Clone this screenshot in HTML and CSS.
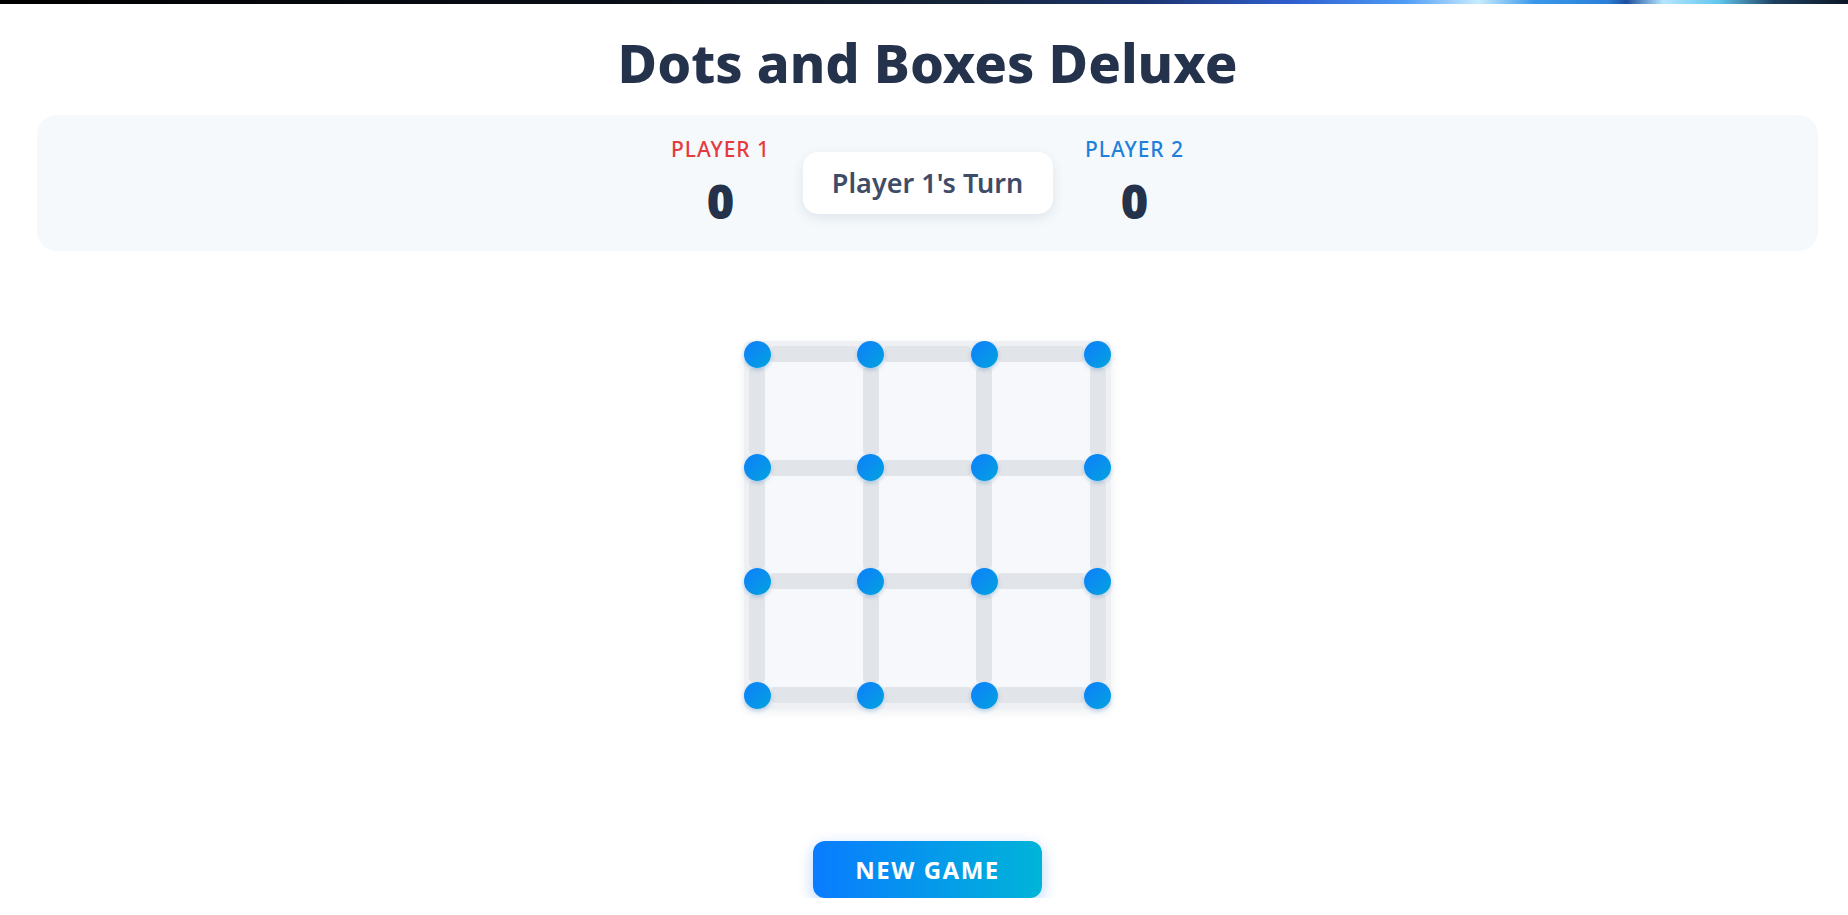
FILE: index.html
```html
<!DOCTYPE html>
<html>
	<head>
		<meta charset="utf-8">
		<title>Dots and Boxes Deluxe</title>
		<link rel="stylesheet" href="styles.css">
	</head>

	<body>
		<div class="topbar"></div>
		<div class="app">
			<h1 class="title">Dots and Boxes Deluxe</h1>

			<div class="scoreboard">
				<div class="player p1">
					<div class="player-name">PLAYER 1</div>
					<div class="player-score">0</div>
				</div>
				<div class="turn">Player 1's Turn</div>
				<div class="player p2">
					<div class="player-name">PLAYER 2</div>
					<div class="player-score">0</div>
				</div>
			</div>

			<div class="board">
				<div class="dot"></div><div class="hline"></div><div class="dot"></div><div class="hline"></div><div class="dot"></div><div class="hline"></div><div class="dot"></div>
				<div class="vline"></div><div class="box"></div><div class="vline"></div><div class="box"></div><div class="vline"></div><div class="box"></div><div class="vline"></div>
				<div class="dot"></div><div class="hline"></div><div class="dot"></div><div class="hline"></div><div class="dot"></div><div class="hline"></div><div class="dot"></div>
				<div class="vline"></div><div class="box"></div><div class="vline"></div><div class="box"></div><div class="vline"></div><div class="box"></div><div class="vline"></div>
				<div class="dot"></div><div class="hline"></div><div class="dot"></div><div class="hline"></div><div class="dot"></div><div class="hline"></div><div class="dot"></div>
				<div class="vline"></div><div class="box"></div><div class="vline"></div><div class="box"></div><div class="vline"></div><div class="box"></div><div class="vline"></div>
				<div class="dot"></div><div class="hline"></div><div class="dot"></div><div class="hline"></div><div class="dot"></div><div class="hline"></div><div class="dot"></div>
			</div>

			<div class="controls">
				<button class="new-game">NEW GAME</button>
			</div>
		</div>
	</body>
</html>
```

FILE: styles.css
```css
html,
body {
	margin: 0;
	padding: 0;
	background-color: #ffffff;
	font-family: "Noto Sans", "Open Sans", sans-serif;
}

.topbar {
	height: 4px;
	background: linear-gradient(
		90deg,
		#000000 0%,
		#0a0f18 35%,
		#15243a 52%,
		#1c3570 62%,
		#2f5fd0 70%,
		#4d9cf5 76%,
		#c8ecff 80%,
		#3a98ea 83%,
		#2a7fd8 87%,
		#1d4f9e 88%,
		#b5e6ff 90%,
		#62c6ee 93%,
		#1d4060 96%,
		#0c1624 100%
	);
}

.app {
	padding: 0 30px 0 37px;
}

.title {
	margin: 26px 0 0;
	text-align: center;
	font-size: 54px;
	line-height: 1.2;
	font-weight: 800;
	color: #24324c;
}

.scoreboard {
	display: flex;
	justify-content: center;
	align-items: center;
	gap: 32px;
	margin-top: 20px;
	padding: 22px 0;
	background-color: #f5f9fc;
	border-radius: 20px;
}

.player {
	display: flex;
	flex-direction: column;
	align-items: center;
	min-width: 100px;
}

.player-name {
	font-size: 21px;
	line-height: 24px;
	font-weight: 500;
	letter-spacing: 1px;
}

.p1 .player-name {
	color: #e53b3e;
}

.p2 .player-name {
	color: #1f80dc;
}

.player-score {
	margin-top: 13px;
	font-size: 47px;
	line-height: 55px;
	font-weight: 900;
	color: #24324c;
}

.turn {
	width: 250px;
	height: 62px;
	box-sizing: border-box;
	display: flex;
	align-items: center;
	justify-content: center;
	background-color: #ffffff;
	border-radius: 15px;
	box-shadow: 0 4px 12px rgba(30, 50, 80, 0.1);
	font-size: 27px;
	font-weight: 600;
	color: #3f4c67;
}

.board {
	display: grid;
	grid-template-columns: 27px 86.6px 27px 86.6px 27px 86.6px 27px;
	grid-template-rows: 27px 86.6px 27px 86.6px 27px 86.6px 27px;
	width: max-content;
	margin: 90px auto 0;
	background-color: #eef0f3;
	border-radius: 6px;
	box-shadow: 0 3px 10px rgba(40, 60, 90, 0.08);
}

.dot {
	position: relative;
	z-index: 2;
	border-radius: 50%;
	background: linear-gradient(135deg, #0a80fa 0%, #0a8ef0 45%, #00a4dc 100%);
	box-shadow: 0 2px 4px rgba(0, 90, 180, 0.25);
}

.hline,
.vline {
	position: relative;
	z-index: 1;
	background-color: #e1e4e8;
	border-radius: 4px;
}

.hline {
	align-self: center;
	height: 16px;
}

.vline {
	justify-self: center;
	width: 16px;
}

.box {
	margin: -5.5px;
	background-color: #f6f8fb;
}

.controls {
	display: flex;
	justify-content: center;
	margin-top: 132px;
}

.new-game {
	width: 229px;
	height: 57px;
	border: none;
	border-radius: 12px;
	background: linear-gradient(90deg, #0a7cff 0%, #00b4d8 100%);
	box-shadow: 0 5px 15px rgba(20, 110, 255, 0.3);
	color: #ffffff;
	font-family: "Noto Sans", "Open Sans", sans-serif;
	font-size: 24px;
	font-weight: 700;
	letter-spacing: 1.5px;
	cursor: pointer;
}
```
